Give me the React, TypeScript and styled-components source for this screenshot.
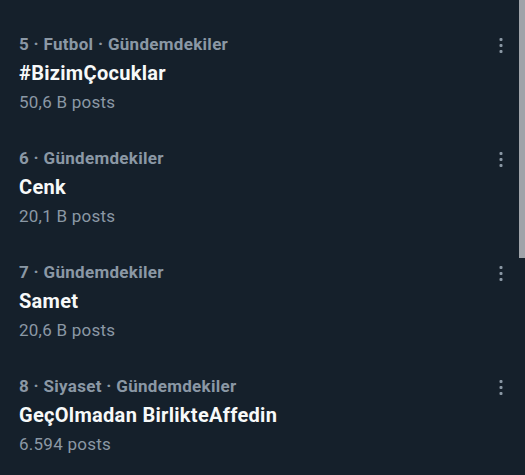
import React from "react";
import styled, { createGlobalStyle } from "styled-components";

const Global = createGlobalStyle`
  html, body { margin: 0; padding: 0; background: #15202b; }
  body { font-family: Roboto, "Noto Sans", sans-serif; overflow: hidden; }
`;

const Page = styled.div`
  width: 525px;
  height: 475px;
  display: flex;
  background: #15202b;
  overflow: hidden;
`;

const List = styled.div`
  flex: 1;
  display: flex;
  flex-direction: column;
  padding-top: 16px;
`;

const Scrollbar = styled.div`
  width: 6px;
  display: flex;
  flex-direction: column;
`;

const Thumb = styled.div`
  height: 258px;
  background: #9fa3a9;
`;

const Item = styled.div`
  height: 114px;
  box-sizing: border-box;
  padding: 14px 10px 14px 19px;
  display: flex;
  align-items: flex-start;
`;

const Texts = styled.div`
  flex: 1;
  display: flex;
  flex-direction: column;
`;

const Meta = styled.div`
  color: #8b98a5;
  font-size: 17px;
  font-weight: 700;
  letter-spacing: 0.3px;
  line-height: 29px;
`;

const Title = styled.div`
  color: #f7f9f9;
  font-size: 20px;
  font-weight: 700;
  letter-spacing: 0.3px;
  line-height: 29px;
`;

const Count = styled.div`
  color: #8b98a5;
  font-size: 17px;
  font-weight: 400;
  letter-spacing: 0.25px;
  line-height: 29px;
`;

const More = styled.div`
  width: 16px;
  height: 29px;
  display: flex;
  align-items: center;
  justify-content: center;
`;

const Dots = () => (
  <svg width="4" height="16" viewBox="0 0 4 16">
    <rect x="0.5" y="1" width="3" height="3" rx="1" fill="#8b98a5" />
    <rect x="0.5" y="7" width="3" height="3" rx="1" fill="#8b98a5" />
    <rect x="0.5" y="13" width="3" height="3" rx="1" fill="#8b98a5" />
  </svg>
);

const trends = [
  { meta: "5 · Futbol · Gündemdekiler", title: "#BizimÇocuklar", count: "50,6 B posts" },
  { meta: "6 · Gündemdekiler", title: "Cenk", count: "20,1 B posts" },
  { meta: "7 · Gündemdekiler", title: "Samet", count: "20,6 B posts" },
  { meta: "8 · Siyaset · Gündemdekiler", title: "GeçOlmadan BirlikteAffedin", count: "6.594 posts" },
];

export default function App() {
  return (
    <Page>
      <Global />
      <List>
        {trends.map((t) => (
          <Item key={t.title}>
            <Texts>
              <Meta>{t.meta}</Meta>
              <Title>{t.title}</Title>
              <Count>{t.count}</Count>
            </Texts>
            <More>
              <Dots />
            </More>
          </Item>
        ))}
      </List>
      <Scrollbar>
        <Thumb />
      </Scrollbar>
    </Page>
  );
}
